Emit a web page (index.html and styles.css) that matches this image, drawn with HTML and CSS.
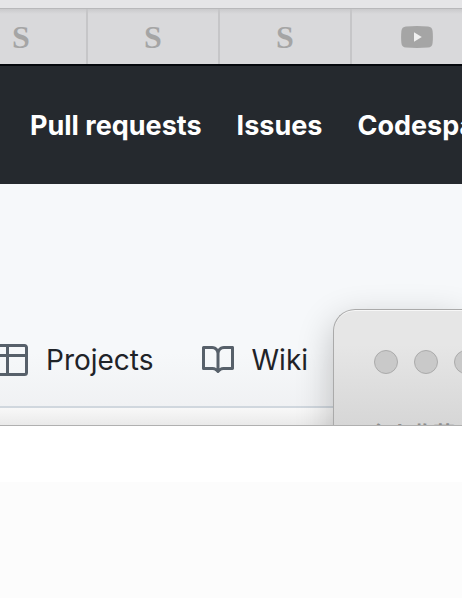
FILE: index.html
```html
<!DOCTYPE html>
<html lang="en">
<head>
<meta charset="utf-8">
<title>Desktop</title>
<link rel="stylesheet" href="styles.css">
</head>
<body>
<div class="toolbar"></div>
<div class="tabs">
  <button class="tab">S</button>
  <button class="tab">S</button>
  <button class="tab">S</button>
  <button class="tab" aria-label="Video">
    <svg class="video" viewBox="0 0 32 22"><path d="M5 .4Q16-.4 27 .4Q31.2.7 31.6 5Q32.2 11 31.6 17Q31.2 21.3 27 21.6Q16 22.4 5 21.6Q.8 21.3.4 17Q-.2 11 .4 5Q.8.7 5 .4Z" fill="#a5a5a5"/><path d="M13 6.2 20.8 11 13 15.8Z" fill="#f0f0f0"/></svg>
  </button>
</div>
<nav class="header">
  <a href="#">Pull requests</a>
  <a href="#">Issues</a>
  <a href="#">Codespaces</a>
</nav>
<main class="page">
  <nav class="repo-nav">
    <a href="#" class="item">
      <svg class="icon" viewBox="0 0 16 16"><path d="M0 1.75C0 .784.784 0 1.75 0h12.5C15.216 0 16 .784 16 1.75v12.5A1.75 1.75 0 0 1 14.25 16H1.75A1.75 1.75 0 0 1 0 14.25ZM6.5 6.5v8h7.75a.25.25 0 0 0 .25-.25V6.5Zm8-1.5V1.75a.25.25 0 0 0-.25-.25H6.5V5Zm-13 1.5v7.75c0 .138.112.25.25.25H5v-8ZM5 5V1.5H1.75a.25.25 0 0 0-.25.25V5Z"/></svg>
      <span>Projects</span>
    </a>
    <a href="#" class="item">
      <svg class="icon" viewBox="0 0 16 16"><path d="M0 1.75A.75.75 0 0 1 .75 1h4.253c1.227 0 2.317.59 3 1.501A3.743 3.743 0 0 1 11.006 1h4.245a.75.75 0 0 1 .75.75v10.5a.75.75 0 0 1-.75.75h-4.507a2.25 2.25 0 0 0-1.591.659l-.622.621a.75.75 0 0 1-1.06 0l-.622-.621A2.25 2.25 0 0 0 5.258 13H.75a.75.75 0 0 1-.75-.75Zm7.251 10.324.004-5.073-.002-2.253A2.25 2.25 0 0 0 5.003 2.5H1.5v9h3.757a3.75 3.75 0 0 1 1.994.574ZM8.755 4.75l-.004 7.322a3.752 3.752 0 0 1 1.992-.572H14.5v-9h-3.495a2.25 2.25 0 0 0-2.25 2.25Z"/></svg>
      <span>Wiki</span>
    </a>
  </nav>
  <div class="content"></div>
  <section class="window">
    <div class="controls">
      <button aria-label="Close"></button>
      <button aria-label="Minimize"></button>
      <button aria-label="Zoom"></button>
    </div>
    <div class="sidebar" lang="zh-CN">个人收藏</div>
  </section>
</main>
<div class="panel-top"></div>
<div class="panel"></div>
</body>
</html>
```
FILE: styles.css
```css
* { box-sizing: border-box; }
body {
  display: flex;
  flex-direction: column;
  min-height: 100vh;
  margin: 0;
  overflow: hidden;
  background: #fff;
  font-family: Inter, "Liberation Sans", sans-serif;
}
a { color: inherit; text-decoration: none; }
button { margin: 0; padding: 0; border: 0; }

.toolbar { height: 8px; background: #e5e5e7; }
.tabs {
  display: flex;
  height: 58px;
  margin-left: -44px;
  border-top: 1px solid #b8b8ba;
  border-bottom: 2px solid #05080c;
  background: linear-gradient(#cacacc, #d9d9db 5px);
}
.tab {
  display: flex;
  flex: none;
  align-items: center;
  justify-content: center;
  width: 132px;
  border-right: 2px solid #c6c6c8;
  background: none;
  color: #a5a5a5;
  font: bold 32px/32px "Liberation Serif", serif;
}
.video { width: 32px; height: 22px; }

.header {
  display: flex;
  align-items: center;
  gap: 35px;
  height: 118px;
  padding: 2px 0 0 30px;
  overflow: hidden;
  background: #25292e;
  color: #fff;
  font-size: 27px;
  font-weight: 700;
  line-height: 42px;
  white-space: nowrap;
}

.page {
  position: relative;
  height: 242px;
  overflow: hidden;
  border-bottom: 1px solid #b0b0b0;
  background: linear-gradient(#f6f8fa 70%, #eeeff1);
}
.repo-nav {
  display: flex;
  gap: 48px;
  padding: 155px 0 25px;
  margin-left: -4px;
  border-bottom: 2px solid #d0d7de;
  color: #1f2328;
  font-size: 28px;
  line-height: 42px;
}
.item { display: flex; align-items: center; gap: 18px; }
.icon { width: 32px; height: 32px; fill: #57606a; }
.content { height: 18px; background: linear-gradient(#f8f8f8, #e9e9e9); }

.window {
  position: absolute;
  top: 125px;
  left: 333px;
  right: 0;
  height: 180px;
  padding: 40px 0 0 40px;
  overflow: hidden;
  border: 1px solid #aaa;
  border-right: 0;
  border-radius: 22px 0 0 0;
  background: linear-gradient(#e6e6e6 35px, #d6d6d6 117px);
  box-shadow: inset 0 1px #f7f7f7, 0 12px 36px rgba(0, 0, 0, .24);
}
.controls { display: flex; gap: 16px; }
.controls button {
  flex: none;
  width: 24px;
  height: 24px;
  border: 1px solid #ababab;
  border-radius: 50%;
  background: #c9c9c9;
}
.sidebar {
  margin: 44px 0 0 -7px;
  color: #8d8d8d;
  font: bold 22px/28px "Noto Sans CJK SC", sans-serif;
  white-space: nowrap;
}
.panel-top { height: 56px; background: #fff; }
.panel { flex: 1; background: #fcfcfc; }
```
